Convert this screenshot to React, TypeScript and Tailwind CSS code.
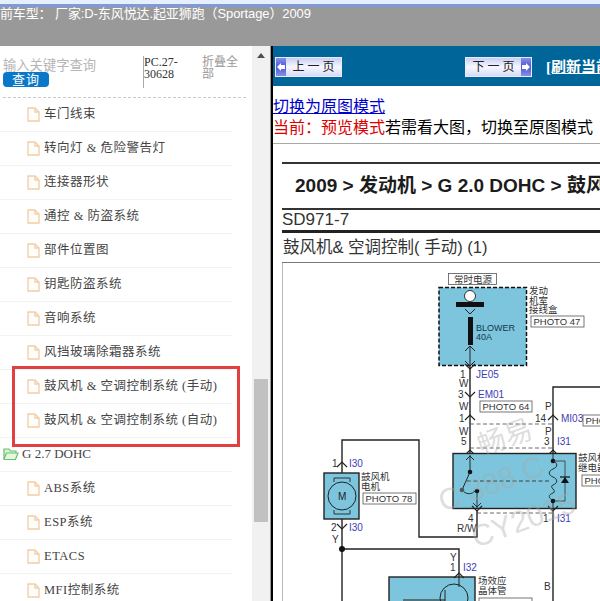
const cjk = "font-['Liberation_Serif','Noto_Sans_CJK_SC',serif]";

const rowsTop = ['车门线束', '转向灯 & 危险警告灯', '连接器形状', '通控 & 防盗系统', '部件位置图', '钥匙防盗系统', '音响系统', '风挡玻璃除霜器系统', '鼓风机 & 空调控制系统 (手动)', '鼓风机 & 空调控制系统 (自动)'];
const rowsBottom = ['ABS系统', 'ESP系统', 'ETACS', 'MFI控制系统'];

const DocIcon = () => (
  <svg width="13" height="15" viewBox="0 0 13 15" fill="none" stroke="#f2cda6" strokeWidth="1.3" className="shrink-0">
    <path d="M1 1h7l4 4v9H1z" fill="#fffdf9" />
    <path d="M8 1v4h4" />
  </svg>
);

const FolderIcon = () => (
  <svg width="16" height="14" viewBox="0 0 16 14" fill="none" stroke="#6cbf6c" strokeWidth="1.2" className="shrink-0">
    <path d="M1 12V2h5l1.5 2H13v2" fill="#d8f3d0" />
    <path d="M1 12l2.5-6H15l-2.5 6.5H1z" fill="#e4f7df" />
  </svg>
);

const Row = ({ label }: { label: string }) => (
  <div className="flex h-[34px] w-[232px] items-center gap-[4px] border-b border-[#f3f3f3] pl-[27px] text-[12.5px] tracking-[0.5px] text-[#444]">
    <DocIcon />
    <span className="whitespace-nowrap">{label}</span>
  </div>
);

const NavButton = ({ label, arrow }: { label: string; arrow: 'left' | 'right' }) => (
  <div className={`flex h-[20px] w-[67px] shrink-0 items-center border border-[#e8eaf8] bg-gradient-to-b from-[#c9cdf2] via-[#f7f7ff] to-[#d7daf5] ${arrow === 'right' ? 'flex-row-reverse' : ''}`}>
    <div className="flex h-full w-[10px] items-center justify-center bg-gradient-to-b from-[#8a8fe6] via-[#4c54d4] to-[#8a8fe6]">
      <svg width="8" height="8" viewBox="0 0 8 8" fill="#fff">
        <path d={arrow === 'left' ? 'M0 4l4-4v2h4v4H4v2z' : 'M8 4L4 0v2H0v4h4v2z'} />
      </svg>
    </div>
    <span className="flex-1 text-center text-[12px] leading-none whitespace-nowrap text-[#222]">{label}</span>
  </div>
);

const Label = ({ x, y, t, c = '#333', s = 9.5 }: { x: number; y: number; t: string; c?: string; s?: number }) => (
  <text x={x} y={y} fontSize={s} fill={c} fontFamily="'Liberation Sans','Noto Sans CJK SC',sans-serif">{t}</text>
);

const Photo = ({ x, y, w, t }: { x: number; y: number; w: number; t: string }) => (
  <g>
    <rect x={x} y={y} width={w} height={11} fill="#fff" stroke="#555" strokeWidth="0.8" />
    <Label x={x + 2.5} y={y + 9} t={t} />
  </g>
);

const Chev = ({ x, y, up }: { x: number; y: number; up?: boolean }) => (
  <path d={up ? `M${x - 5} ${y + 4}l5-5 5 5` : `M${x - 5} ${y - 4}l5 5 5-5`} fill="none" stroke="#222" strokeWidth="1.2" />
);

const Diagram = () => (
  <svg viewBox="282 262 318 339" width="318" height="339" className="block" fill="none">
    <path d="M282 601V262.5H600" stroke="#777" strokeWidth="1" />

    {/* fuse box */}
    <rect x="448.5" y="273.5" width="48" height="11" stroke="#555" strokeWidth="0.8" />
    <Label x={454} y={282.5} t="常时电源" s={9.5} />
    <rect x="439" y="287.5" width="87.5" height="78" fill="#7cc5dc" stroke="#111" strokeWidth="1.5" strokeDasharray="4 2" />
    <circle cx="470" cy="296" r="5.5" fill="#fff" stroke="#333" />
    <rect x="456" y="302" width="28" height="5" fill="#111" />
    <path d="M465 309l5 5 5-5" stroke="#222" />
    <rect x="468" y="317" width="5" height="28" fill="#111" />
    <Label x={476} y={331} t="BLOWER" c="#16384a" s={9} />
    <Label x={476} y={340} t="40A" c="#16384a" s={9} />
    <path d="M465 351l5-5 5 5M470 346v20M465 361l5 5 5-5" stroke="#222" />
    <Label x={529} y={294} t="发动" />
    <Label x={529} y={303.5} t="机室" />
    <Label x={529} y={313} t="接线盒" />
    <Photo x={531} y={316} w={53} t="PHOTO 47" />

    {/* main wires */}
    <path d="M470 366v87M553 453v-66h47" stroke="#222" strokeWidth="1.4" />
    <path d="M470 424h83M470 448h83M477 513h76" stroke="#444" strokeWidth="0.8" strokeDasharray="4 2.5" />
    <Chev x={470} y={368} />
    <Chev x={470} y={396} />
    <Chev x={470} y={416} up />
    <Chev x={553} y={416} up />
    <Chev x={470} y={451} up />
    <Chev x={553} y={451} up />
    <Label x={460} y={378} t="1" s={10} />
    <Label x={459} y={387} t="W" s={10} />
    <Label x={476} y={378} t="JE05" c="#3d3db5" s={10} />
    <Label x={458} y={398} t="3" s={10} />
    <Label x={478} y={398} t="EM01" c="#3d3db5" s={10} />
    <Label x={459} y={410} t="W" s={10} />
    <Photo x={480} y={401} w={52} t="PHOTO 64" />
    <Label x={459} y={422} t="1" s={10} />
    <Label x={459} y={435} t="W" s={10} />
    <Label x={461} y={445} t="5" s={10} />
    <Label x={545} y={410} t="P" s={10} />
    <Label x={535} y={422} t="14" s={10} />
    <Label x={561} y={422} t="MI03" c="#3d3db5" s={10} />
    <Photo x={583} y={415} w={30} t="PHOTO" />
    <Label x={545} y={435} t="P" s={10} />
    <Label x={544} y={445} t="3" s={10} />
    <Label x={557} y={445} t="I31" c="#3d3db5" s={10} />

    {/* relay */}
    <rect x="453" y="453.5" width="123" height="55" fill="#7cc5dc" stroke="#222" strokeWidth="1.4" />
    <path d="M470 455v17M466 460l4-4 4 4" stroke="#222" />
    <circle cx="470" cy="472" r="2.3" fill="#111" />
    <path d="M470 472l-8 18" stroke="#222" />
    <circle cx="462" cy="490" r="2.3" fill="#555" />
    <circle cx="477" cy="491" r="2.3" fill="#111" />
    <path d="M464 492q6 4 11-1M477 491v17M473 503l4 4 4-4" stroke="#222" strokeWidth="0.9" />
    <path d="M467 481h83" stroke="#222" strokeWidth="0.8" strokeDasharray="4 2.5" />
    <path d="M553 453v8M553 461c5 2 5 6 0 8s-5 6 0 8 5 6 0 8 5 6 0 8-5 4 0 8M553 501v7" stroke="#222" strokeWidth="0.9" />
    <circle cx="553" cy="461" r="2.3" fill="#111" />
    <circle cx="553" cy="501" r="2.3" fill="#111" />
    <path d="M553 461h12v40h-12" stroke="#333" strokeWidth="0.8" />
    <path d="M561 483h8l-4-6z" fill="#111" />
    <path d="M560 477h10" stroke="#111" strokeWidth="1.2" />
    <Label x={578} y={461} t="鼓风机" />
    <Label x={578} y={471} t="继电器" />
    <Photo x={582} y={475} w={30} t="PHO" />
    <Chev x={477} y={510} />
    <Chev x={553} y={510} />
    <Label x={468} y={522} t="4" s={10} />
    <Label x={457} y={532} t="R/W" s={10} />
    <Label x={543} y={522} t="1" s={10} />
    <Label x={557} y={522} t="I31" c="#3d3db5" s={10} />
    <path d="M553 508v93" stroke="#222" strokeWidth="1.4" />
    <Label x={544} y={590} t="B" s={10} />

    {/* motor */}
    <path d="M342 473v-33h77v97h58v-26" stroke="#222" strokeWidth="1.4" />
    <Chev x={342} y={463} up />
    <Label x={332} y={467} t="1" s={10} />
    <Label x={349} y={467} t="I30" c="#3d3db5" s={10} />
    <rect x="324" y="473" width="35" height="46" fill="#7cc5dc" stroke="#222" strokeWidth="1.4" />
    <circle cx="342" cy="496" r="14" stroke="#222" strokeWidth="1" />
    <path d="M334 482v-4h16v4M334 510v4h16v-4" stroke="#222" strokeWidth="0.9" />
    <Label x={338} y={500} t="M" c="#222" s={10} />
    <Label x={361} y={480} t="鼓风机" />
    <Label x={361} y={490} t="电机" />
    <Photo x={363} y={493} w={53} t="PHOTO 78" />
    <path d="M342 519v82M342 549h117v28" stroke="#222" strokeWidth="1.4" />
    <Chev x={342} y={528} />
    <Label x={331} y={531} t="2" s={10} />
    <Label x={349} y={531} t="I30" c="#3d3db5" s={10} />
    <Label x={332} y={543} t="Y" s={10} />
    <circle cx="342" cy="549" r="3" fill="#111" />

    {/* transistor */}
    <Label x={450} y={561} t="Y" s={10} />
    <Label x={450} y={571} t="1" s={10} />
    <Label x={463} y={571} t="I32" c="#3d3db5" s={10} />
    <rect x="389" y="577" width="86" height="30" fill="#7cc5dc" stroke="#222" strokeWidth="1.4" />
    <circle cx="454" cy="598" r="14" stroke="#222" />
    <path d="M403 600h42M445 590v11M459 577v10" stroke="#222" />
    <Chev x={459} y={574} up />
    <Label x={478} y={584} t="场效应" />
    <Label x={478} y={594} t="晶体管" />
    <Photo x={479} y={598} w={53} t="PHOTO 78" />

    {/* watermark */}
    <g fill="#a8a8a8" fillOpacity="0.4" fontFamily="'Liberation Sans','Noto Sans CJK SC',sans-serif">
      <text x="482" y="456" fontSize="28" transform="rotate(-20 482 456)">畅易</text>
      <text x="443" y="512" fontSize="30" transform="rotate(-20 443 512)">C 388 C</text>
      <text x="476" y="548" fontSize="30" transform="rotate(-20 476 548)">CY2015</text>
    </g>
  </svg>
);

export default function App() {
  return (
    <div className={`relative flex h-[601px] w-[600px] flex-col overflow-hidden bg-white ${cjk}`}>
      <div className="h-1 shrink-0 bg-[#e8effc]" />
      <div className="h-[3px] shrink-0 bg-[#7d9bd6]" />
      <div className="h-[39px] shrink-0 overflow-hidden bg-[#999999] font-['Liberation_Sans','Noto_Sans_CJK_SC',sans-serif]">
        <p className="-ml-[13px] -mt-[1px] text-[13px] leading-[16px] tracking-[-0.1px] whitespace-nowrap text-white">当前车型： 厂家:D-东风悦达.起亚狮跑（Sportage）2009</p>
      </div>

      <div className="flex min-h-0 flex-1">
        {/* tree */}
        <div className="relative w-[252px] shrink-0 overflow-hidden">
          <div className="mx-[3px] flex h-[52px] w-[243px] border-b border-dashed border-[#c8c8c8] pt-[12px]">
            <div className="w-[140px] shrink-0">
              <p className="text-[13.3px] leading-[15px] whitespace-nowrap text-[#b5b5b5]">输入关键字查询</p>
              <div className="-mt-[1px] flex h-[15px] w-[46px] items-center justify-center rounded-[4px] bg-[#0a78c8] text-[13px] leading-none tracking-[1px] text-white">查询</div>
            </div>
            <div className="-mt-[2px] h-[32px] w-[59px] shrink-0 border-l border-[#aaaaaa] pr-[20px] text-[12px] leading-[12px] text-[#333]">PC.27-30628</div>
            <div className="-mt-[2px] w-[38px] shrink-0 text-[12px] leading-[12px] text-[#999]">折叠全部</div>
          </div>
          <div>
            {rowsTop.map(r => <Row key={r} label={r} />)}
            <div className="flex h-[34px] w-[232px] items-center gap-[3px] border-b border-[#f3f3f3] pb-[2px] pl-[3px] text-[13px] text-[#444]">
              <FolderIcon />
              <span>G 2.7 DOHC</span>
            </div>
            {rowsBottom.map(r => <Row key={r} label={r} />)}
          </div>
          <div className="absolute top-[320px] left-[12px] h-[81px] w-[228px] border-[3px] border-[#e04040]" />
        </div>

        {/* scrollbar */}
        <div className="flex w-[18px] shrink-0 flex-col items-center bg-[#f1f1f1]">
          <div className="mt-[7px] h-0 w-0 border-x-[4px] border-b-[5px] border-x-transparent border-b-[#505050]" />
          <div className="mt-[321px] h-[143px] w-[14px] bg-[#c1c1c1]" />
        </div>
        <div className="w-[1px] shrink-0 bg-[#999]" />
        <div className="w-[2px] shrink-0 bg-black" />

        {/* page */}
        <div className="min-w-0 flex-1 overflow-hidden">
          <div className="flex h-[40px] items-center bg-[#006699] pt-[2px] pl-[2px]">
            <NavButton label="上 一 页" arrow="left" />
            <div className="ml-[123px] shrink-0"><NavButton label="下 一 页" arrow="right" /></div>
            <span className="ml-[14px] text-[15px] font-bold whitespace-nowrap text-white underline">[刷新当前页]</span>
          </div>
          <div className="mt-[10px] h-[48px] border-b border-[#aaaaaa] text-[16px] leading-[21px] whitespace-nowrap">
            <a className="text-[#0000cc] underline">切换为原图模式</a>
            <p><span className="text-[#dd0000]">当前：预览模式</span><span className="text-black">若需看大图，切换至原图模式</span></p>
          </div>
          <div className="ml-[9px] font-['Liberation_Sans','Noto_Sans_CJK_SC',sans-serif]">
            <div className="mt-[18px] flex h-[48px] items-center border-y-2 border-[#333] pt-[1px] pl-[13px] text-[19px] font-bold whitespace-nowrap text-[#1c1c1c]">
              2009 &gt; 发动机 &gt; G 2.0 DOHC &gt; 鼓风机 &amp; 空调控制
            </div>
            <div className="flex h-[23px] items-center border-b-[3px] border-[#222] text-[17px] text-[#333]">SD971-7</div>
            <div className="flex h-[29px] items-center pl-[1px] text-[16.5px] whitespace-nowrap text-[#333]">鼓风机&amp; 空调控制( 手动) (1)</div>
            <Diagram />
          </div>
        </div>
      </div>
    </div>
  );
}
